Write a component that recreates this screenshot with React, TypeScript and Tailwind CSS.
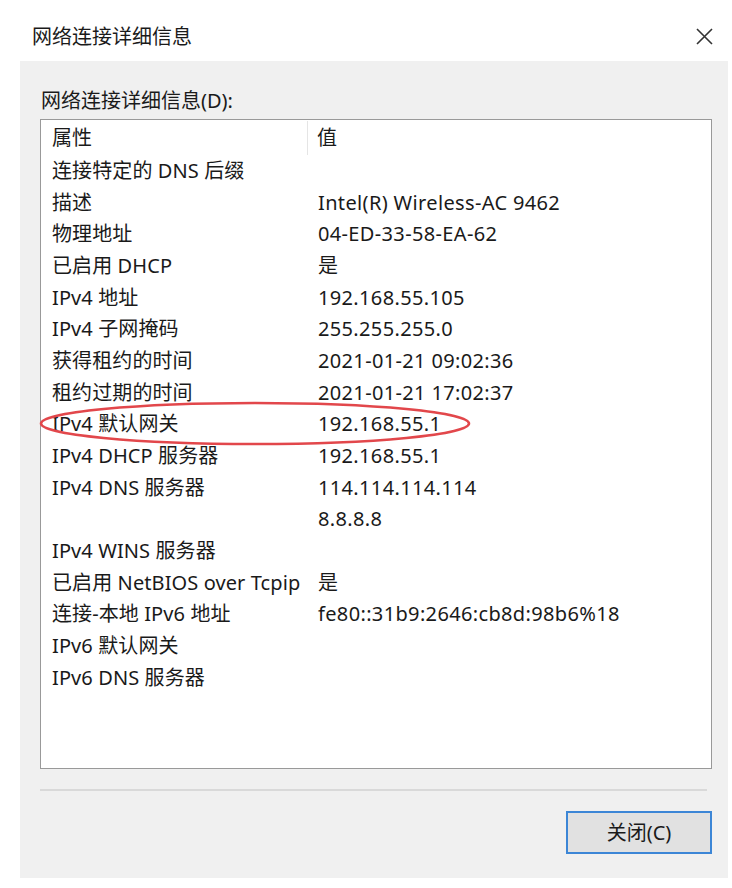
import React from 'react';

const rows: [string, string][] = [
  ['连接特定的 DNS 后缀', ''],
  ['描述', 'Intel(R) Wireless-AC 9462'],
  ['物理地址', '04-ED-33-58-EA-62'],
  ['已启用 DHCP', '是'],
  ['IPv4 地址', '192.168.55.105'],
  ['IPv4 子网掩码', '255.255.255.0'],
  ['获得租约的时间', '2021-01-21 09:02:36'],
  ['租约过期的时间', '2021-01-21 17:02:37'],
  ['IPv4 默认网关', '192.168.55.1'],
  ['IPv4 DHCP 服务器', '192.168.55.1'],
  ['IPv4 DNS 服务器', '114.114.114.114'],
  ['', '8.8.8.8'],
  ['IPv4 WINS 服务器', ''],
  ['已启用 NetBIOS over Tcpip', '是'],
  ['连接-本地 IPv6 地址', 'fe80::31b9:2646:cb8d:98b6%18'],
  ['IPv6 默认网关', ''],
  ['IPv6 DNS 服务器', ''],
];

const font = "font-['Noto_Sans','Noto_Sans_CJK_SC',sans-serif]";

const App: React.FC = () => {
  return (
    <div className={`relative w-[732px] h-[888px] bg-white text-[#1a1a1a] ${font}`}>
      {/* Title bar */}
      <div className="flex items-start justify-between h-[61px] pl-[32px] pr-[19px] pt-[27px]">
        <span className="text-[20px] leading-[20px]">网络连接详细信息</span>
        <svg width="17" height="17" viewBox="0 0 17 17" className="text-[#333] mt-[1px]">
          <path d="M1 1L16 16M16 1L1 16" stroke="currentColor" strokeWidth="1.6" />
        </svg>
      </div>

      {/* Body */}
      <div className="ml-[20px] w-[708px] h-[817px] bg-[#f0f0f0] pl-[20px] pr-[16px] pt-[28px] flex flex-col">
        <div className="text-[20px] leading-[24px] mb-[6px] pl-[1px]">网络连接详细信息(D):</div>

        {/* List view */}
        <div className="h-[650px] border border-[#999] bg-white text-[20px] pt-[1px]">
          <div className="flex h-[34px] items-center">
            <div className="w-[267px] h-full pl-[11px] flex items-center border-r border-[#e5e5e5]">属性</div>
            <div className="pl-[9px]">值</div>
          </div>
          {rows.map(([k, v], i) => (
            <div key={i} className="flex h-[31.7px] items-center whitespace-nowrap">
              <div className="w-[267px] pl-[11px] tracking-[0.1px]">{k}</div>
              <div className="pl-[10px] tracking-[0.35px]">{v}</div>
            </div>
          ))}
        </div>

        {/* Separator */}
        <div className="mt-[20px] mr-[5px] h-[2px] bg-[#d9d9d9]" />

        {/* Button */}
        <div className="mt-[20px] flex justify-end">
          <button className="w-[146px] h-[43px] border-2 border-[#3c86d6] bg-[#e1e1e1] text-[20px] leading-none">
            关闭(C)
          </button>
        </div>
      </div>

      {/* Red annotation ellipse */}
      <svg className="absolute left-0 top-0 pointer-events-none" width="732" height="888">
        <ellipse cx="255" cy="423.5" rx="214" ry="20.5" fill="none" stroke="#e2474b" strokeWidth="2.6" />
      </svg>
    </div>
  );
};

export default App;
